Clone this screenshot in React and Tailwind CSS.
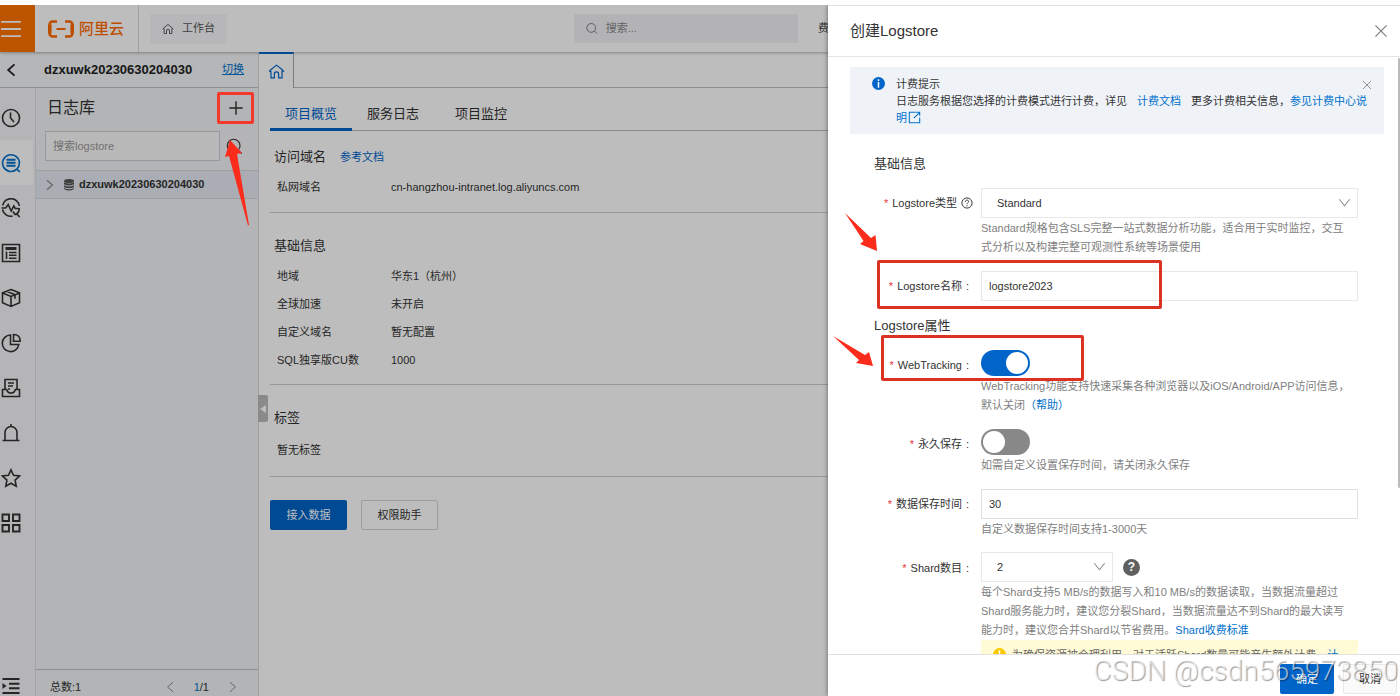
import React, { useState } from 'react';
import clsx from 'clsx';

function Icon({ size = 20, className, strokeWidth = 1.6, children }) {
  return (
    <svg width={size} height={size} viewBox="0 0 20 20" fill="none" stroke="currentColor" strokeWidth={strokeWidth} className={className} aria-hidden="true">
      {children}
    </svg>
  );
}

const HomeIcon = (props) => (
  <Icon {...props}><path d="M1.500 10.500 2.500 8.500 10 2.500l7.500 6 1 2M3.500 9v8.500h4V13a2.500 2.500 0 0 1 5 0v4.500h4V9" strokeLinejoin="round" /></Icon>
);
const SearchIcon = (props) => (
  <Icon {...props}><circle cx="9" cy="9" r="7.500" /><path d="m14.500 14.500 4 4" /></Icon>
);
const CloseIcon = (props) => (
  <Icon {...props}><path d="m2 2 16 16M18 2 2 18" /></Icon>
);
const DownIcon = (props) => (
  <Icon {...props}><path d="m2 5 8 10 8-10" /></Icon>
);
const LeftIcon = (props) => (
  <Icon {...props}><path d="m15 2-9 8 9 8" /></Icon>
);
const RightIcon = (props) => (
  <Icon {...props}><path d="m5 2 9 8-9 8" /></Icon>
);

const railItems = [
  { label: '最近访问', icon: <><circle cx="10" cy="10" r="8.500" /><path d="M9.500 4.500V10l3.500 4" /></> },
  { label: '日志库', active: true, icon: <><path d="M15.800 16.200A8.400 8.400 0 1 1 18.400 10c0 2.200-.9 4.500-2.600 6.200l3 2.600" /><path d="M5.500 6.700h9M5.500 9.700h9M5.500 12.700h9" strokeWidth="2" /></> },
  { label: '指标', icon: <><path d="M1.700 7.500A8.400 8.400 0 0 1 18.300 8M1.500 11.500a8.400 8.400 0 0 0 10 6.600M.5 10h4.200l2.500-3.500 3 6.500 2.600-5 1.500 2.500h3.500" /><path d="M18.300 10c0 3-1 5-2.800 6.200M12 13.500l2 3 1.500-.5 3.300 3" /></> },
  { label: '资源', icon: <><path d="M1.500 1.500h17v17h-17z" /><path d="M4.500 5.500h11" strokeWidth="3" /><path d="M5.500 8.500v7.500M8 9.500h7.500M8 12.300h7.500M8 15.200h7.500" /></> },
  { label: '任务', icon: <><path d="m10 1.500 8.500 3.300v10L10 18.500l-8.500-3.700v-10L10 1.500ZM1.500 5 10 8.500 18.500 5M10 8.500v10M5.700 3.200 14 6.800v4" /></> },
  { label: '仪表盘', icon: <><path d="M9.500 2A8.300 8.300 0 1 0 17.800 11.500H9.500V2Z" /><path d="M12.500 1.500v6.700h6.700c0-4.200-2.500-6.700-6.700-6.700Z" /></> },
  { label: '导出', icon: <><path d="M4 11V1.500h12V11M7 5h6M7 8h5M7 11h2" /><path d="M1.500 11.500h4.200c.5 2.500 2 3.500 4.300 3.500s3.800-1 4.300-3.500h4.200v7h-17v-7Z" /></> },
  { label: '告警', icon: <><path d="M4 17.500V9.500a6 6 0 0 1 12 0v8M1.500 17.500h17M10 1v2.500" /></> },
  { label: '收藏', icon: <path d="m10 1.800 2.500 5.500 6 .7-4.400 4.100 1.100 6L10 15.200l-5.200 2.900 1.100-6L1.500 8l6-.7L10 1.800Z" /> },
  { label: '更多', icon: <path d="M1.500 1.500h6.500v6.500H1.500zM12 1.500h6.500v6.500H12zM1.500 12h6.500v6.500H1.500zM12 12h6.500v6.500H12z" strokeWidth="1.900" /> },
];

const basicInfo = [
  ['地域', '华东1（杭州）'],
  ['全球加速', '未开启'],
  ['自定义域名', '暂无配置'],
  ['SQL独享版CU数', '1000'],
];

function TopBar() {
  return (
    <header className="relative z-10 flex h-[47px] shrink-0 items-center bg-white text-[11px] shadow-[0_1px_3px_rgba(0,0,0,0.3)]">
      <button aria-label="菜单" className="flex h-full w-[35px] shrink-0 items-center bg-[#ff7200] text-white">
        <Icon size={22} strokeWidth={1.6}><path d="M1 3.500h18M1 10h18M1 16.500h18" /></Icon>
      </button>
      <a href="#" className="flex h-full w-[104px] shrink-0 items-center gap-1 border-r border-[#d8d8d8] pt-px pl-3 text-[15px] font-medium text-[#ff6a00]">
        <svg width="28" height="18" viewBox="0 0 28 18" fill="none" stroke="currentColor" aria-hidden="true">
          <path d="M10 1.500H6Q2.500 1.500 2.500 5v8q0 3.500 3.500 3.500h4M18 1.500h4q3.500 0 3.500 3.500v8q0 3.500-3.500 3.500h-4" strokeWidth="2.400" />
          <path d="M2.800 4.500v9M25.200 4.500v9" strokeWidth="3.600" />
          <path d="M9.500 9h9" strokeWidth="2" />
        </svg>
        阿里云
      </a>
      <a href="#" className="ml-[11px] flex h-[30px] w-[77px] shrink-0 items-center justify-center gap-2 bg-[#f7f7fa] text-[#555]">
        <HomeIcon size={12} />工作台
      </a>
      <label className="ml-[347px] flex h-[29px] w-[224px] shrink-0 items-center gap-2 bg-[#f2f2f6] px-3 text-[#777]">
        <SearchIcon size={13} />
        <input aria-label="搜索" placeholder="搜索..." className="w-full bg-transparent outline-none placeholder:text-[#888]" />
      </label>
      <a href="#" className="ml-5 shrink-0 text-[#444]">费用</a>
    </header>
  );
}

function SideRail() {
  return (
    <nav className="flex w-[36px] shrink-0 flex-col border-r border-[#dcdee2] bg-[#f4f5f7] pt-[7px]">
      {railItems.map((item) => (
        <button key={item.label} aria-label={item.label} className={clsx('flex h-[45px] w-[33px] shrink-0 items-center pl-px', item.active ? 'bg-white text-[#0070cc]' : 'text-[#333]')}>
          <Icon>{item.icon}</Icon>
        </button>
      ))}
      <button aria-label="展开" className="mt-auto flex h-5 items-center pl-px text-[#333]">
        <Icon strokeWidth={2}><path d="M1.500 3h17M8 7.700h10.500M8 12.300h10.500M1.500 17h17" /><path d="m1.500 7 4 3-4 3z" fill="currentColor" stroke="none" /></Icon>
      </button>
    </nav>
  );
}

function LogstorePanel() {
  return (
    <aside className="flex min-w-0 flex-1 flex-col bg-[#f1f3f6]">
      <div className="flex h-10 items-center justify-between pr-3 pl-[11px]">
        <h2 className="text-[16px] text-[#333]">日志库</h2>
        <button aria-label="新建Logstore" className="flex h-5 w-5 items-center justify-center text-[#333]">
          <Icon size={18}><path d="M10 2.500v15M2.500 10h15" /></Icon>
        </button>
      </div>
      <div className="mt-[3px] flex pl-[9px]">
        <input aria-label="搜索logstore" placeholder="搜索logstore" className="h-[30px] w-[175px] border border-[#cdcfd3] bg-[#fafafa] px-[7px] text-[11px] outline-none placeholder:text-[#999]" />
        <button aria-label="搜索" className="flex h-[30px] w-7 items-center justify-center bg-[#f4f5f7] text-[#333]">
          <SearchIcon size={17} strokeWidth={1.3} />
        </button>
      </div>
      <a href="#" className="mt-[9px] flex h-[29px] items-center border-y border-[#d2d6dc] bg-[#e6eaf2] pl-[8px] text-[11px] font-bold text-[#333]">
        <RightIcon size={12} strokeWidth={2} className="text-[#888]" />
        <svg width="12" height="12" viewBox="0 0 12 12" fill="#555" className="mr-1 ml-[7px]" aria-hidden="true">
          <ellipse cx="6" cy="2" rx="5" ry="2" />
          <path d="M1 3.200q5 2.600 10 0v2q-5 2.600-10 0zM1 6.200q5 2.600 10 0v1.800q-5 2.600-10 0zM1 9q5 2.600 10 0v1q-5 3-10 0z" />
        </svg>
        dzxuwk20230630204030
      </a>
      <div className="mt-auto flex h-[27px] items-end justify-between border-t border-[#c0c2c6] pr-[19px] pb-px pl-[14px] text-[11px] text-[#333]">
        <span>总数:1</span>
        <div className="flex items-center gap-[18px]">
          <button aria-label="上一页" className="text-[#888]"><LeftIcon size={12} /></button>
          <span><span className="text-[#0070cc]">1</span>/1</span>
          <button aria-label="下一页" className="text-[#888]"><RightIcon size={12} /></button>
        </div>
      </div>
    </aside>
  );
}

function ProjectOverview() {
  return (
    <main className="min-w-0 flex-1 bg-white pl-[11px] text-[11px] text-[#333]">
      <div className="flex h-[43px] border-b border-[#bcbcbc] text-[13px]">
        <button className="h-[43px] w-[82px] border-b-[3px] border-[#0064c8] pt-3 text-[#0064c8]">项目概览</button>
        <button className="h-[43px] w-[82px] border-b-[3px] border-transparent pt-3">服务日志</button>
        <button className="ml-[6px] h-[43px] w-[82px] border-b-[3px] border-transparent pt-3">项目监控</button>
      </div>
      <section className="border-b border-[#cccccc] pt-4 pb-[11px]">
        <div className="flex h-5 items-center gap-[14px] pl-1">
          <h3 className="text-[13px]">访问域名</h3>
          <a href="#" className="text-[#0064c8]">参考文档</a>
        </div>
        <dl className="mt-[6px] flex h-7 items-center pl-[7px]">
          <dt className="w-[114px]">私网域名</dt>
          <dd>cn-hangzhou-intranet.log.aliyuncs.com</dd>
        </dl>
      </section>
      <section className="border-b border-[#cccccc] pt-[23px] pb-[10px]">
        <h3 className="pl-1 text-[13px] leading-5">基础信息</h3>
        <dl className="mt-[6px] pl-[7px]">
          {basicInfo.map(([name, value]) => (
            <div key={name} className="flex h-7 items-center">
              <dt className="w-[114px]">{name}</dt>
              <dd>{value}</dd>
            </div>
          ))}
        </dl>
      </section>
      <section className="border-b border-[#cccccc] pt-[23px] pb-3">
        <h3 className="pl-1 text-[13px] leading-5">标签</h3>
        <p className="mt-2 pl-[7px] leading-7">暂无标签</p>
      </section>
      <div className="mt-[23px] flex gap-[14px]">
        <button className="h-[30px] w-[77px] rounded-xs bg-[#0064c8] text-white">接入数据</button>
        <button className="h-[30px] w-[77px] rounded-xs border border-[#d4d4d4]">权限助手</button>
      </div>
    </main>
  );
}

function FormRow({ label, htmlFor, help, marked, tip, children }) {
  return (
    <div className={clsx('relative flex', tip ? 'mb-[14px]' : 'mb-[15px]')}>
      <label htmlFor={htmlFor} className={clsx('flex h-[30px] w-[107px] shrink-0 items-center justify-end text-[#333]', help ? 'pr-2' : 'pr-3')}>
        <span className="mr-1 text-[#e5353a]">*</span>
        {label}
        {help ? (
          <Icon size={12} className="ml-1"><circle cx="10" cy="10" r="8.500" /><path d="M7.300 8c0-3.800 5.400-3.800 5.400-.3 0 1.800-2.700 2-2.700 4.300M10 13.500v2" /></Icon>
        ) : (
          <span className="ml-1">:</span>
        )}
      </label>
      <div className="min-w-0 flex-1">
        {children}
        {tip && <p className="mt-px pr-[6px] leading-[19px] text-[#808080]">{tip}</p>}
      </div>
      {marked === 'name' && <div className="pointer-events-none absolute -top-[11px] left-[3px] h-[49px] w-[285px] rounded-xs border-[3px] border-[#dc3224]" />}
      {marked === 'switch' && <div className="pointer-events-none absolute -top-[15px] left-[7px] h-[46px] w-[203px] rounded-xs border-[3px] border-[#dc3224]" />}
    </div>
  );
}

function Switch({ id, checked, onChange }) {
  return (
    <input
      id={id}
      type="checkbox"
      role="switch"
      checked={checked}
      onChange={(e) => onChange(e.target.checked)}
      className="block h-[26px] w-[49px] appearance-none rounded-full bg-[#888] p-[2px] before:block before:h-[22px] before:w-[22px] before:rounded-full before:bg-white checked:bg-[#0064c8] checked:before:ml-[23px]"
    />
  );
}

function SelectBox({ id, className, options }) {
  return (
    <div className={clsx('relative', className)}>
      <select id={id} className="block h-[30px] w-full appearance-none rounded-none border border-[#e8e8e8] bg-white pl-[15px] text-[#333]">
        {options.map((o) => <option key={o}>{o}</option>)}
      </select>
      <DownIcon size={13} className="pointer-events-none absolute top-2 right-[7px] text-[#888]" />
    </div>
  );
}

function CreateLogstoreDrawer() {
  const [name, setName] = useState('logstore2023');
  const [ttl, setTtl] = useState('30');
  const [webTracking, setWebTracking] = useState(true);
  const [permanent, setPermanent] = useState(false);

  return (
    <div role="dialog" aria-label="创建Logstore" className="absolute inset-y-0 right-0 z-30 flex w-[572px] flex-col border-t border-[#e0e0e0] bg-white text-[11px] shadow-[-1px_0_4px_rgba(0,0,0,0.35)]">
      <div className="flex h-[51px] shrink-0 items-center justify-between border-b border-[#e5e5e5] pr-3 pl-[22px]">
        <h2 className="text-[15px] text-[#333]">创建Logstore</h2>
        <button aria-label="关闭" className="text-[#777]"><CloseIcon size={14} strokeWidth={1.5} /></button>
      </div>

      <div className="relative min-h-0 flex-1 overflow-hidden pt-[10px] pr-4 pl-[22px]">
        <div className="absolute top-px right-0 h-[430px] w-[2px] rounded-full bg-[#bbb]" />
        <div className="flex bg-[#eff3f8] pt-[9px] pr-3 pb-[7px] pl-[22px] leading-[17px] text-[#333]">
          <svg width="13" height="13" viewBox="0 0 14 14" className="mt-px mr-[11px] shrink-0" aria-hidden="true">
            <circle cx="7" cy="7" r="7" fill="#0064c8" />
            <path d="M7 2.500v1.800M7 5.500v6" stroke="#fff" strokeWidth="1.600" />
          </svg>
          <div className="min-w-0 flex-1">
            <div className="flex items-center justify-between">
              <h3>计费提示</h3>
              <button aria-label="关闭提示" className="text-[#777]"><CloseIcon size={10} /></button>
            </div>
            <p className="pr-1">
              日志服务根据您选择的计费模式进行计费，详见
              <a href="#" className="mx-[10px] text-[#0070cc]">计费文档</a>
              更多计费相关信息，<a href="#" className="text-[#0070cc]">参见计费中心说明
                <Icon size={13} className="ml-px inline align-[-2px]"><path d="M12 2H2v16h16V10M12.500 2H18v5.500M18 2 9 11" /></Icon>
              </a>
            </p>
          </div>
        </div>

        <form className="pr-[26px] pl-6" onSubmit={(e) => e.preventDefault()}>
          <h3 className="mt-5 mb-[14px] text-[13px] leading-5 text-[#333]">基础信息</h3>
          <FormRow label="Logstore类型" htmlFor="type" help tip="Standard规格包含SLS完整一站式数据分析功能，适合用于实时监控，交互式分析以及构建完整可观测性系统等场景使用">
            <SelectBox id="type" options={['Standard', 'Query']} />
          </FormRow>
          <FormRow label="Logstore名称" htmlFor="name" marked="name">
            <input id="name" value={name} onChange={(e) => setName(e.target.value)} className="block h-[30px] w-full border border-[#e8e8e8] px-[7px] text-[#333]" />
          </FormRow>

          <h3 className="mb-[14px] text-[13px] leading-5 text-[#333]">Logstore属性</h3>
          <FormRow
            label="WebTracking"
            htmlFor="tracking"
            marked="switch"
            tip={<>WebTracking功能支持快速采集各种浏览器以及iOS/Android/APP访问信息，默认关闭<a href="#" className="text-[#0070cc]">（帮助）</a></>}
          >
            <Switch id="tracking" checked={webTracking} onChange={setWebTracking} />
          </FormRow>
          <FormRow label="永久保存" htmlFor="permanent" tip="如需自定义设置保存时间，请关闭永久保存">
            <Switch id="permanent" checked={permanent} onChange={setPermanent} />
          </FormRow>
          <FormRow label="数据保存时间" htmlFor="ttl" tip="自定义数据保存时间支持1-3000天">
            <input id="ttl" value={ttl} onChange={(e) => setTtl(e.target.value)} className="block h-[30px] w-full border border-[#e0e0e0] px-[7px] text-[#333]" />
          </FormRow>
          <FormRow
            label="Shard数目"
            htmlFor="shard"
            tip={<>每个Shard支持5 MB/s的数据写入和10 MB/s的数据读取，当数据流量超过Shard服务能力时，建议您分裂Shard，当数据流量达不到Shard的最大读写能力时，建议您合并Shard以节省费用。<a href="#" className="text-[#0070cc]">Shard收费标准</a></>}
          >
            <div className="-mt-px flex items-center gap-[10px]">
              <SelectBox id="shard" className="w-[132px]" options={['2', '4', '8']} />
              <button aria-label="帮助" className="flex h-[17px] w-[17px] items-center justify-center rounded-full bg-[#606060] text-[12px] font-bold text-white">?</button>
            </div>
          </FormRow>
          <div className="-mt-[14px] ml-[107px] flex items-start gap-[6px] bg-[#fffbd6] px-3 py-[6px] leading-[19px] text-[#666]">
            <svg width="13" height="13" viewBox="0 0 14 14" className="mt-[2px] shrink-0" aria-hidden="true">
              <circle cx="7" cy="7" r="7" fill="#fac800" />
              <path d="M7 2.500v5.500M7 9.500v1.800" stroke="#fff" strokeWidth="1.600" />
            </svg>
            <p>为确保资源被合理利用，对于活跃Shard数量可能产生额外计费，<a href="#" className="text-[#0070cc]">计费说明</a></p>
          </div>
        </form>
      </div>

      <div className="flex h-[42px] shrink-0 items-start justify-end gap-[9px] border-t border-[#e0e0e0] pt-[9px] pr-[3px]">
        <button className="h-[30px] w-[54px] rounded-xs bg-[#0064c8] text-white">确定</button>
        <button className="h-[30px] w-[54px] rounded-xs border border-[#e8e8e8] bg-[#fafafa] text-[#333]">取消</button>
      </div>

      <svg width="50" height="160" viewBox="0 0 50 160" fill="#fb2c1c" className="pointer-events-none absolute top-[204px] left-[4px]" aria-hidden="true">
        <path d="m13 3 26 25 4.500-3 1.500 16-17-7 3.500-3Z" />
        <path d="m1 126 32 19 4-3 4 14-17-3 3-3Z" />
      </svg>
    </div>
  );
}

function App() {
  return (
    <div className="flex h-screen flex-col bg-white pt-[5px] font-['Liberation_Sans','Noto_Sans_CJK_SC',sans-serif]">
      <div className="relative flex min-h-0 flex-1 flex-col overflow-hidden">
        <TopBar />
        <div className="flex min-h-0 flex-1">
          <div className="relative flex w-[259px] shrink-0 flex-col border-r border-[#d8dade]">
            <div className="flex h-[36px] shrink-0 items-center border-b border-[#bfc2c6] bg-[#f4f6f9] pr-[14px] pl-1">
              <button aria-label="返回" className="text-[#222]"><LeftIcon size={14} strokeWidth={2.6} /></button>
              <h1 className="ml-[26px] text-[13px] font-bold text-[#222]">dzxuwk20230630204030</h1>
              <a href="#" className="ml-auto text-[11px] text-[#0070cc] underline">切换</a>
            </div>
            <div className="flex min-h-0 flex-1">
              <SideRail />
              <LogstorePanel />
            </div>
            <button aria-label="收起" className="absolute top-[343px] -right-[10px] z-10 flex h-[27px] w-[10px] items-center justify-center rounded-r-xs bg-[#bbb]">
              <svg width="6" height="8" viewBox="0 0 6 8" fill="#fff" aria-hidden="true"><path d="M6 0v8L0 4z" /></svg>
            </button>
          </div>
          <div className="flex min-w-0 flex-1 flex-col">
            <div className="flex h-[36px] shrink-0 border-b border-[#bfbfbf] bg-white">
              <a href="#" aria-label="首页" className="relative z-20 flex h-[36px] w-[35px] items-center justify-center border-t-2 border-r border-t-[#0064c8] border-r-[#a8a8a8] bg-white text-[#0064c8]">
                <HomeIcon size={17} strokeWidth={1.4} />
              </a>
            </div>
            <ProjectOverview />
          </div>
        </div>
        <div className="absolute inset-0 z-20 bg-black/26" />

        {/* callouts on the "+" button */}
        <div className="pointer-events-none absolute top-[87px] left-[217px] z-20 h-8 w-[37px] rounded-xs border-[3px] border-[#f2392c]" />
        <svg width="30" height="92" viewBox="0 0 30 92" fill="#fb2c1c" className="pointer-events-none absolute top-[132px] left-[222px] z-20" aria-hidden="true">
          <path d="m8 3 12 13-5 1 12 71-1 .5L7 19l-4 1Z" />
        </svg>

        <CreateLogstoreDrawer />
        <div className="pointer-events-none absolute right-[2px] bottom-[7px] z-40 font-['Roboto','Liberation_Sans',sans-serif] text-[28px] leading-9 font-light whitespace-nowrap text-white/60 [text-shadow:1px_1px_1px_rgba(0,0,0,0.4)]">
          CSDN @csdn565973850
        </div>
      </div>
    </div>
  );
}

export default App;
